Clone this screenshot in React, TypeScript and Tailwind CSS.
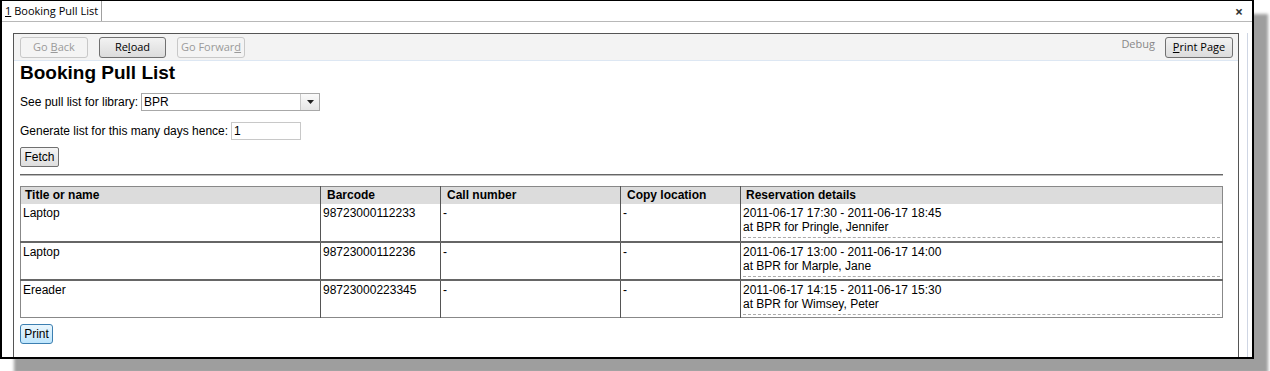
import React from 'react'

const rows = [
  { title: 'Laptop', barcode: '98723000112233', when: '2011-06-17 17:30 - 2011-06-17 18:45', who: 'at BPR for Pringle, Jennifer' },
  { title: 'Laptop', barcode: '98723000112236', when: '2011-06-17 13:00 - 2011-06-17 14:00', who: 'at BPR for Marple, Jane' },
  { title: 'Ereader', barcode: '98723000223345', when: '2011-06-17 14:15 - 2011-06-17 15:30', who: 'at BPR for Wimsey, Peter' },
]

function ToolButton({ children, disabled, className = '' }: { children: React.ReactNode; disabled?: boolean; className?: string }) {
  return (
    <div
      className={`flex h-[21px] items-center justify-center rounded-[3px] border text-[11px] ${
        disabled ? 'border-[#c8c8c8] bg-[#f4f4f4] text-[#9a9a9a]' : 'border-[#707070] bg-gradient-to-b from-[#f2f2f2] to-[#dcdcdc] text-black'
      } ${className}`}
    >
      {children}
    </div>
  )
}

export default function App() {
  return (
    <div className="h-[371px] w-[1270px] overflow-hidden bg-white" style={{ fontFamily: '"Liberation Sans", Arial, sans-serif' }}>
      <div className="flex h-[359px] w-[1254px] flex-col overflow-hidden border-2 border-t border-black bg-white shadow-[14px_14px_3px_#9e9e9e]">
        {/* tab strip */}
        <div className="flex h-[21px] shrink-0 items-stretch border-b border-[#b8b8b8] bg-white" style={{ fontFamily: '"Open Sans", "Noto Sans", sans-serif' }}>
          <div className="flex items-center border-r border-[#a0a0a0] bg-white px-[3px] text-[11px] text-black">
            <span className="underline">1</span>&nbsp;Booking Pull List
          </div>
          <div className="flex-1" />
          <div className="flex w-[26px] items-center justify-center text-[14px] font-bold text-[#333]">×</div>
        </div>

        <div className="flex min-h-0 flex-1 pl-[11px] pr-[2px] pt-[11px]">
          <div className="flex min-h-0 flex-1 flex-col border border-b-0 border-[#555]">
            {/* nav toolbar */}
            <div className="flex h-[27px] shrink-0 items-center border-b border-[#dde7f3] bg-[#f3f3f3] pl-[6px] pr-[5px]" style={{ fontFamily: '"Open Sans", "Noto Sans", sans-serif' }}>
              <ToolButton disabled className="w-[68px]">
                Go&nbsp;<span className="underline">B</span>ack
              </ToolButton>
              <ToolButton className="ml-[11px] w-[67px]">
                Re<span className="underline">l</span>oad
              </ToolButton>
              <ToolButton disabled className="ml-[11px] w-[68px]">
                Go Forwar<span className="underline">d</span>
              </ToolButton>
              <div className="flex-1" />
              <span className="mr-[10px] -mt-[6px] text-[11px] text-[#888]">Debug</span>
              <ToolButton className="w-[68px]">
                <span className="underline">P</span>rint Page
              </ToolButton>
            </div>

            {/* page body */}
            <div className="flex min-h-0 flex-1 flex-col pl-[6px] pr-[15px]">
              <h1 className="mt-[1px] text-[19px] font-bold leading-[22px] text-black">Booking Pull List</h1>

              <div className="mt-[9px] flex items-center text-[12px] text-black">
                <span>See pull list for library:</span>
                <div className="ml-[3px] flex h-[18px] w-[179px] items-center border border-[#a8a8a8] bg-white">
                  <span className="flex-1 pl-[2px]">BPR</span>
                  <div className="flex h-full w-[19px] items-center justify-center border-l border-[#c8c8c8] bg-gradient-to-b from-[#fafafa] to-[#e6e6e6]">
                    <svg width="7" height="4" viewBox="0 0 7 4"><path d="M0 0h7L3.5 4z" fill="#222" /></svg>
                  </div>
                </div>
              </div>

              <div className="mt-[11px] flex items-center text-[12px] text-black">
                <span>Generate list for this many days hence:</span>
                <div className="ml-[3px] flex h-[18px] w-[70px] items-center border border-[#c8c8c8] bg-white pl-[2px]">1</div>
              </div>

              <div className="mt-[7px] flex h-[20px] w-[39px] items-center justify-center rounded-[2px] border border-[#707070] bg-gradient-to-b from-[#f4f4f4] to-[#dedede] text-[12px] text-black">
                Fetch
              </div>

              <div className="mt-[7px] h-[2px] border-t border-b border-[#666] border-b-[#bbb]" />

              <table className="mt-[10px] w-[1203px] border-collapse border border-[#888] text-[12px] text-black">
                <thead>
                  <tr className="h-[17px] bg-[#dcdcdc] text-left">
                    <th className="w-[300px] border-r border-[#555] px-[4px] py-0 font-bold leading-[16px]">Title or name</th>
                    <th className="w-[120px] border-r border-[#555] px-[6px] py-0 font-bold leading-[16px]">Barcode</th>
                    <th className="w-[180px] border-r border-[#555] px-[6px] py-0 font-bold leading-[16px]">Call number</th>
                    <th className="w-[120px] border-r border-[#555] px-[6px] py-0 font-bold leading-[16px]">Copy location</th>
                    <th className="px-[5px] py-0 font-bold leading-[16px]">Reservation details</th>
                  </tr>
                </thead>
                <tbody>
                  {rows.map((r, i) => (
                    <tr key={i} className={`h-[38px] align-top ${i > 0 ? 'border-t-2 border-[#666]' : ''}`}>
                      <td className="border-r border-[#555] px-[2px] pt-[2px] leading-[14px]">{r.title}</td>
                      <td className="border-r border-[#555] px-[2px] pt-[2px] leading-[14px]">{r.barcode}</td>
                      <td className="border-r border-[#555] px-[2px] pt-[2px] leading-[14px]">-</td>
                      <td className="border-r border-[#555] px-[2px] pt-[2px] leading-[14px]">-</td>
                      <td className="px-[2px] pt-[2px] leading-[14px]">
                        <div className="border-b border-dashed border-[#aaa] pb-[3px]">
                          <div>{r.when}</div>
                          <div>{r.who}</div>
                        </div>
                      </td>
                    </tr>
                  ))}
                </tbody>
              </table>

              <div className="mt-[6px] flex h-[20px] w-[33px] items-center justify-center rounded-[3px] border border-[#3c7fb1] bg-gradient-to-b from-[#eaf6fd] to-[#bee6fd] text-[12px] text-black">
                Print
              </div>
            </div>
          </div>
          <div className="ml-[8px] w-[1px] bg-[#cfd6e4]" />
          <div className="w-[2px]" />
        </div>
      </div>
    </div>
  )
}
